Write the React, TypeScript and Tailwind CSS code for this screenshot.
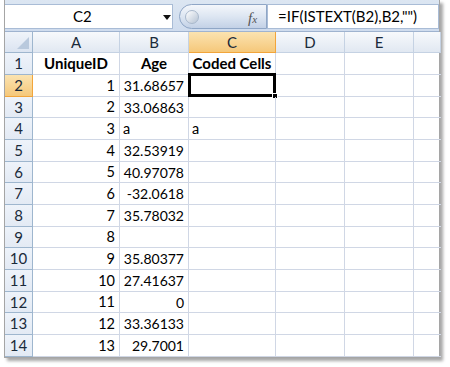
import React from "react";

const cols = ["A", "B", "C", "D", "E", ""];
const heights = [22, 22, 21, 22, 22, 21, 22, 22, 21, 22, 22, 21, 22, 22];

type Row = { a?: string; b?: string; bLeft?: boolean; c?: string; bold?: boolean };
const rows: Row[] = [
  { a: "UniqueID", b: "Age", c: "Coded Cells", bold: true },
  { a: "1", b: "31.68657" },
  { a: "2", b: "33.06863" },
  { a: "3", b: "a", bLeft: true, c: "a" },
  { a: "4", b: "32.53919" },
  { a: "5", b: "40.97078" },
  { a: "6", b: "-32.0618" },
  { a: "7", b: "35.78032" },
  { a: "8", b: "" },
  { a: "9", b: "35.80377" },
  { a: "10", b: "27.41637" },
  { a: "11", b: "0" },
  { a: "12", b: "33.36133" },
  { a: "13", b: "29.7001" },
];

const font = { fontFamily: "Lato, 'Open Sans', sans-serif" };

export default function App() {
  return (
    <div className="w-[450px] h-[367px] bg-white relative overflow-hidden" style={font}>
      <div className="ml-[4px] w-[436px] shadow-[3px_3px_3px_rgba(0,0,0,0.35)] border-l border-r border-b border-[#a5a5a5] bg-white">
        {/* formula bar */}
        <div className="h-[32px] bg-gradient-to-b from-[#dce6f2] to-[#cfdcee] flex items-start pt-[4px] border-b border-[#9fb3cf]">
          <div className="w-[168px] h-[25px] bg-white border-y border-r border-[#a9bcd6] flex items-center relative">
            <span className="absolute left-[68px] text-[15px] text-black leading-none">C2</span>
            <svg className="absolute left-[158px] top-[10px]" width="8" height="5" viewBox="0 0 8 5">
              <polygon points="0,0 8,0 4,5" fill="#111" />
            </svg>
          </div>
          <div className="w-[6px]" />
          <div className="relative w-[88px] h-[25px] rounded-l-full bg-gradient-to-b from-[#f4f7fb] via-[#dde6f2] to-[#c3d1e6] border border-[#8fa6c6] flex items-center">
            <div className="ml-[5px] w-[14px] h-[14px] rounded-full bg-gradient-to-br from-white to-[#b6c3d4] border border-[#a9b8cc]" />
            <span
              className="absolute left-[68px] top-[2px] text-[15px] italic text-[#555]"
              style={{ fontFamily: "'Liberation Serif', serif" }}
            >
              f<span className="text-[11px]">x</span>
            </span>
          </div>
          <div className="flex-1 h-[25px] bg-white border border-[#a9bcd6] flex items-center pl-[10px]">
            <span className="text-[15px] text-black leading-none">=IF(ISTEXT(B2),B2,"")</span>
          </div>
        </div>
        {/* grid */}
        <div className="grid grid-cols-[28px_87px_69px_87px_69px_69px_27px]">
          <div className="h-[21px] bg-gradient-to-b from-[#f0f4fa] to-[#dbe4f1] border-r border-b border-[#9eb6ce] relative">
            <svg className="absolute right-[3px] bottom-[3px]" width="12" height="12" viewBox="0 0 12 12">
              <polygon points="12,0 12,12 0,12" fill="#b9c9dd" />
            </svg>
          </div>
          {cols.map((c, i) =>
            c === "C" ? (
              <div
                key={i}
                className="h-[21px] bg-gradient-to-b from-[#fbe3b0] to-[#f5c87a] border-r border-b border-[#f2a53b] flex items-center justify-center text-[15px] text-[#1a2a3a]"
              >
                {c}
              </div>
            ) : (
              <div
                key={i}
                className="h-[21px] bg-gradient-to-b from-[#f7f9fc] to-[#e1e8f2] border-r border-b border-[#c5d2e3] flex items-center justify-center text-[15px] text-[#1a2a3a]"
              >
                {c}
              </div>
            )
          )}
          {rows.map((r, i) => {
            const h = heights[i];
            const sel = i === 1;
            const hs = { height: h };
            return (
              <React.Fragment key={i}>
                <div
                  style={hs}
                  className={
                    sel
                      ? "bg-gradient-to-b from-[#fbe3b0] to-[#f5c87a] border-r border-b border-[#f2a53b] flex items-center justify-center text-[15px] text-[#1a2a3a]"
                      : "bg-gradient-to-b from-[#eef3fa] to-[#e3eaf4] border-r border-b border-[#9eb6ce] flex items-center justify-center text-[15px] text-[#1a2a3a]"
                  }
                >
                  {i + 1}
                </div>
                <div
                  style={hs}
                  className={
                    r.bold
                      ? "border-r border-b border-[#d0d7e5] flex items-center justify-center font-bold text-[15px] text-black"
                      : "border-r border-b border-[#d0d7e5] flex items-center justify-end pr-[4px] text-[14.5px] text-black"
                  }
                >
                  {r.a}
                </div>
                <div
                  style={hs}
                  className={
                    r.bold
                      ? "border-r border-b border-[#d0d7e5] flex items-center justify-center font-bold text-[15px] text-black"
                      : r.bLeft
                      ? "border-r border-b border-[#d0d7e5] flex items-center justify-start pl-[3px] text-[14.5px] text-black"
                      : "border-r border-b border-[#d0d7e5] flex items-center justify-end pr-[4px] text-[14px] text-black"
                  }
                >
                  {r.b}
                </div>
                <div
                  style={hs}
                  className={
                    r.bold
                      ? "border-r border-b border-[#d0d7e5] flex items-center justify-center font-bold text-[15px] text-black whitespace-nowrap"
                      : "border-r border-b border-[#d0d7e5] flex items-center justify-start pl-[3px] text-[14.5px] text-black relative"
                  }
                >
                  {r.c}
                  {sel && (
                    <div className="absolute left-[-1px] top-[-2px] right-[-1px] bottom-[-1px] border-[3px] border-black">
                      <div className="absolute right-[-5px] bottom-[-5px] w-[6px] h-[6px] bg-black border border-white" />
                    </div>
                  )}
                </div>
                <div style={hs} className="border-r border-b border-[#d0d7e5]" />
                <div style={hs} className="border-r border-b border-[#d0d7e5]" />
                <div style={hs} className="border-b border-[#d0d7e5]" />
              </React.Fragment>
            );
          })}
        </div>
      </div>
    </div>
  );
}
